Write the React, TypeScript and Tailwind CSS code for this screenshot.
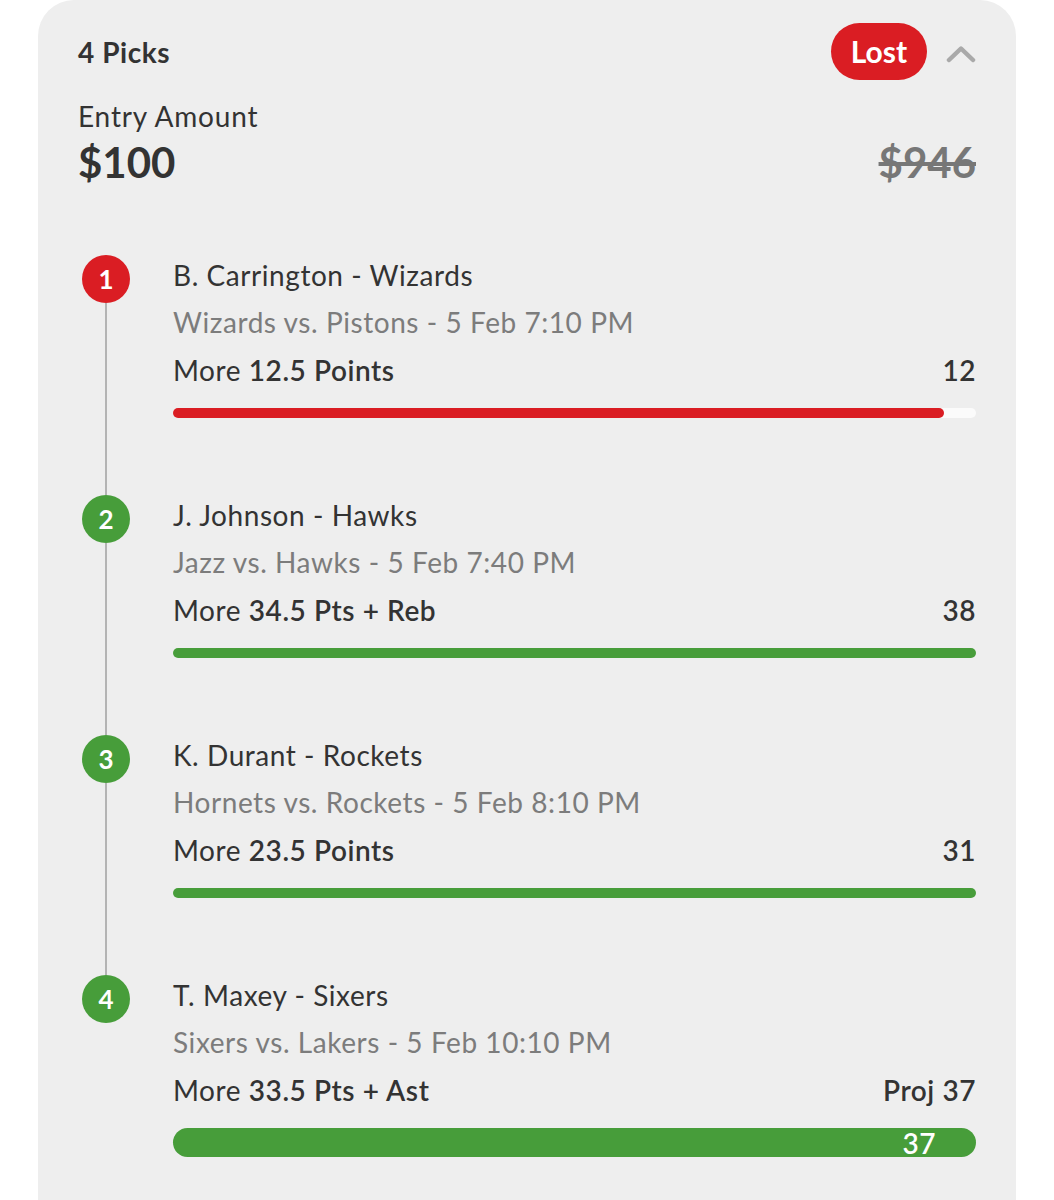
type Pick = {
  n: number;
  player: string;
  game: string;
  line: string;
  value: string;
  status: "lost" | "won" | "live";
  pct: number;
};

const picks: Pick[] = [
  { n: 1, player: "B. Carrington - Wizards", game: "Wizards vs. Pistons - 5 Feb 7:10 PM", line: "12.5 Points", value: "12", status: "lost", pct: 96 },
  { n: 2, player: "J. Johnson - Hawks", game: "Jazz vs. Hawks - 5 Feb 7:40 PM", line: "34.5 Pts + Reb", value: "38", status: "won", pct: 100 },
  { n: 3, player: "K. Durant - Rockets", game: "Hornets vs. Rockets - 5 Feb 8:10 PM", line: "23.5 Points", value: "31", status: "won", pct: 100 },
  { n: 4, player: "T. Maxey - Sixers", game: "Sixers vs. Lakers - 5 Feb 10:10 PM", line: "33.5 Pts + Ast", value: "Proj 37", status: "live", pct: 100 },
];

function PickRow({ pick, last }: { pick: Pick; last: boolean }) {
  const red = pick.status === "lost";
  return (
    <div className="flex">
      <div className="flex w-[95px] shrink-0 flex-col items-start pl-[4px]">
        <div
          className={
            "flex h-[48px] w-[48px] items-center justify-center rounded-full text-[26px] font-bold text-white " +
            (red ? "bg-[#da1d23]" : "bg-[#479d3a]")
          }
        >
          {pick.n}
        </div>
        {!last && <div className="ml-[23px] w-[2px] flex-1 bg-[#b3b3b3]" />}
      </div>
      <div className={"flex-1 tracking-[0.035em] " + (last ? "pb-[40px]" : "pb-[77px]")}>
        <div className="text-[28px] leading-[40px] text-[#333]">{pick.player}</div>
        <div className="text-[28px] leading-[54px] text-[#7c7c7c]">{pick.game}</div>
        <div className="flex items-center justify-between text-[28px] leading-[42px] text-[#333]">
          <span>
            More <span className="font-semibold">{pick.line}</span>
          </span>
          <span className="font-semibold">{pick.value}</span>
        </div>
        {pick.status === "live" ? (
          <div className="mt-[17px] flex h-[29px] items-center justify-end rounded-full bg-[#479d3a] pr-[40px] text-[28px] font-semibold text-white">
            37
          </div>
        ) : (
          <div className="mt-[17px] h-[10px] rounded-full bg-[#fbfbfb]">
            <div
              className={"h-full rounded-full " + (red ? "bg-[#da1d23]" : "bg-[#479d3a]")}
              style={{ width: `${pick.pct}%` }}
            />
          </div>
        )}
      </div>
    </div>
  );
}

export default function App() {
  return (
    <div className="min-h-[1200px] bg-white px-[38px] font-['Lato',sans-serif]">
      <div className="min-h-[1220px] rounded-t-[36px] bg-[#eeeeee] px-[40px] pt-[23px]">
        <div className="flex h-[57px] items-center justify-between">
          <span className="text-[28px] font-bold tracking-[0.02em] text-[#333]">4 Picks</span>
          <div className="flex items-center gap-[19px]">
            <span className="flex h-[57px] w-[96px] items-center justify-center rounded-full bg-[#da1d23] text-[30px] font-bold text-white">
              Lost
            </span>
            <svg width="30" height="19" viewBox="0 0 30 19" fill="none" className="mt-[3px]">
              <path d="M3 16 L15 4.5 L27 16" stroke="#a9a9a9" strokeWidth="4.5" strokeLinecap="round" strokeLinejoin="round" />
            </svg>
          </div>
        </div>
        <div className="mt-[18px] text-[28px] leading-[36px] tracking-[0.03em] text-[#333]">Entry Amount</div>
        <div className="mt-[3px] flex items-center justify-between leading-[50px]">
          <span className="text-[42px] font-bold text-[#333]">$100</span>
          <span className="text-[42px] font-bold text-[#777] line-through">$946</span>
        </div>
        <div className="mt-[68px]">
          {picks.map((p, i) => (
            <PickRow key={p.n} pick={p} last={i === picks.length - 1} />
          ))}
        </div>
      </div>
    </div>
  );
}
